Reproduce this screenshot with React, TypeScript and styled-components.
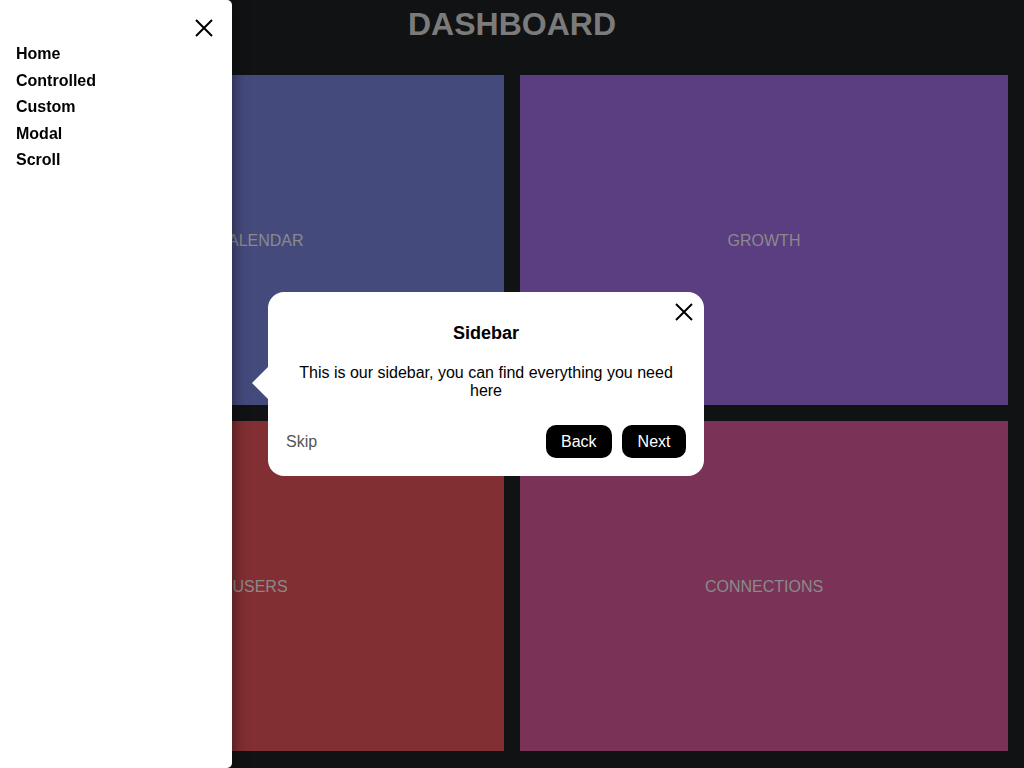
import styled, { createGlobalStyle } from "styled-components";

const GlobalStyle = createGlobalStyle`
    * {
        box-sizing: border-box;
    }

    body {
        margin: 0;
        background-color: #111214;
        font-family: "Liberation Sans", Arial, sans-serif;
    }
`

const panels = [
    {title: "Calendar", color: "#454a7d"},
    {title: "Growth", color: "#5a3e81"},
    {title: "Users", color: "#812f32"},
    {title: "Connections", color: "#7a3356"},
]

const menu = ["Home", "Controlled", "Custom", "Modal", "Scroll"]

const CloseIcon = () => (
    <svg width="18" height="18" viewBox="0 0 18 18" fill="none">
        <path d="M1 1L17 17M17 1L1 17" stroke="#000" strokeWidth="2"/>
    </svg>
)

export default function App() {
    return (
        <>
            <GlobalStyle/>
            <Page>
                <Header>
                    <Title>DASHBOARD</Title>
                </Header>
                <Grid>
                    {panels.map(p => (
                        <Panel key={p.title} $color={p.color}>
                            <PanelLabel>{p.title}</PanelLabel>
                        </Panel>
                    ))}
                </Grid>
            </Page>

            <Sidebar>
                <SidebarClose aria-label="close">
                    <CloseIcon/>
                </SidebarClose>
                <Menu>
                    {menu.map(item => (
                        <MenuItem key={item}>{item}</MenuItem>
                    ))}
                </Menu>
            </Sidebar>

            <Popover>
                <PopoverClose aria-label="close">
                    <CloseIcon/>
                </PopoverClose>
                <PopoverTitle>Sidebar</PopoverTitle>
                <PopoverText>
                    This is our sidebar, you can find everything you need here
                </PopoverText>
                <PopoverFooter>
                    <SkipButton>Skip</SkipButton>
                    <Actions>
                        <NavButton>Back</NavButton>
                        <NavButton>Next</NavButton>
                    </Actions>
                </PopoverFooter>
            </Popover>
        </>
    );
}

const Page = styled.div`
    height: 768px;
    display: flex;
    flex-direction: column;
`

const Header = styled.header`
    height: 75px;
    display: flex;
    justify-content: center;
    padding-top: 6px;
`

const Title = styled.h1`
    margin: 0;
    font-size: 32px;
    line-height: 36px;
    font-weight: 700;
    color: #7b7b7b;
`

const Grid = styled.main`
    flex: 1;
    display: grid;
    grid-template-columns: 1fr 1fr;
    grid-template-rows: 330px 330px;
    gap: 16px;
    padding: 0 16px 17px;
`

const Panel = styled.section<{ $color: string }>`
    background-color: ${props => props.$color};
    display: flex;
    align-items: center;
    justify-content: center;
    padding-top: 2px;
`

const PanelLabel = styled.span`
    font-size: 16px;
    text-transform: uppercase;
    color: #8a8a8a;
`

const Sidebar = styled.nav`
    position: fixed;
    top: 0;
    left: 0;
    bottom: 0;
    width: 232px;
    background-color: #fff;
    border-radius: 0 5px 5px 0;
    box-shadow: 0 0 16px rgba(0, 0, 0, 0.55);
    padding: 41px 16px;
`

const SidebarClose = styled.button`
    position: absolute;
    top: 19px;
    right: 19px;
    padding: 0;
    border: none;
    background: none;
    display: flex;
    cursor: pointer;
`

const Menu = styled.ul`
    list-style: none;
    margin: 0;
    padding: 0;
`

const MenuItem = styled.li`
    font-size: 16px;
    font-weight: 700;
    line-height: 26.5px;
    color: #000;
`

const Popover = styled.div`
    position: fixed;
    top: 292px;
    left: 268px;
    width: 436px;
    background-color: #fff;
    border-radius: 16px;
    padding: 30px 18px 18px;
    display: flex;
    flex-direction: column;
    align-items: center;

    &::before {
        content: "";
        position: absolute;
        left: -16px;
        top: 75px;
        border-top: 16px solid transparent;
        border-bottom: 16px solid transparent;
        border-right: 16px solid #fff;
    }
`

const PopoverClose = styled.button`
    position: absolute;
    top: 11px;
    right: 11px;
    padding: 0;
    border: none;
    background: none;
    display: flex;
    cursor: pointer;
`

const PopoverTitle = styled.h2`
    margin: 0;
    font-size: 18px;
    line-height: 22px;
    font-weight: 700;
    color: #000;
`

const PopoverText = styled.p`
    margin: 20px 0 0;
    font-size: 16px;
    line-height: 18px;
    text-align: center;
    color: #000;
`

const PopoverFooter = styled.div`
    align-self: stretch;
    margin-top: 25px;
    display: flex;
    align-items: center;
    justify-content: space-between;
`

const SkipButton = styled.button`
    padding: 0;
    border: none;
    background: none;
    font-family: inherit;
    font-size: 16px;
    color: #555;
    cursor: pointer;
`

const Actions = styled.div`
    display: flex;
    gap: 10px;
`

const NavButton = styled.button`
    height: 33px;
    padding: 0 15.5px;
    border: none;
    border-radius: 10px;
    background-color: #000;
    color: #fff;
    font-family: inherit;
    font-size: 16px;
    cursor: pointer;
`
